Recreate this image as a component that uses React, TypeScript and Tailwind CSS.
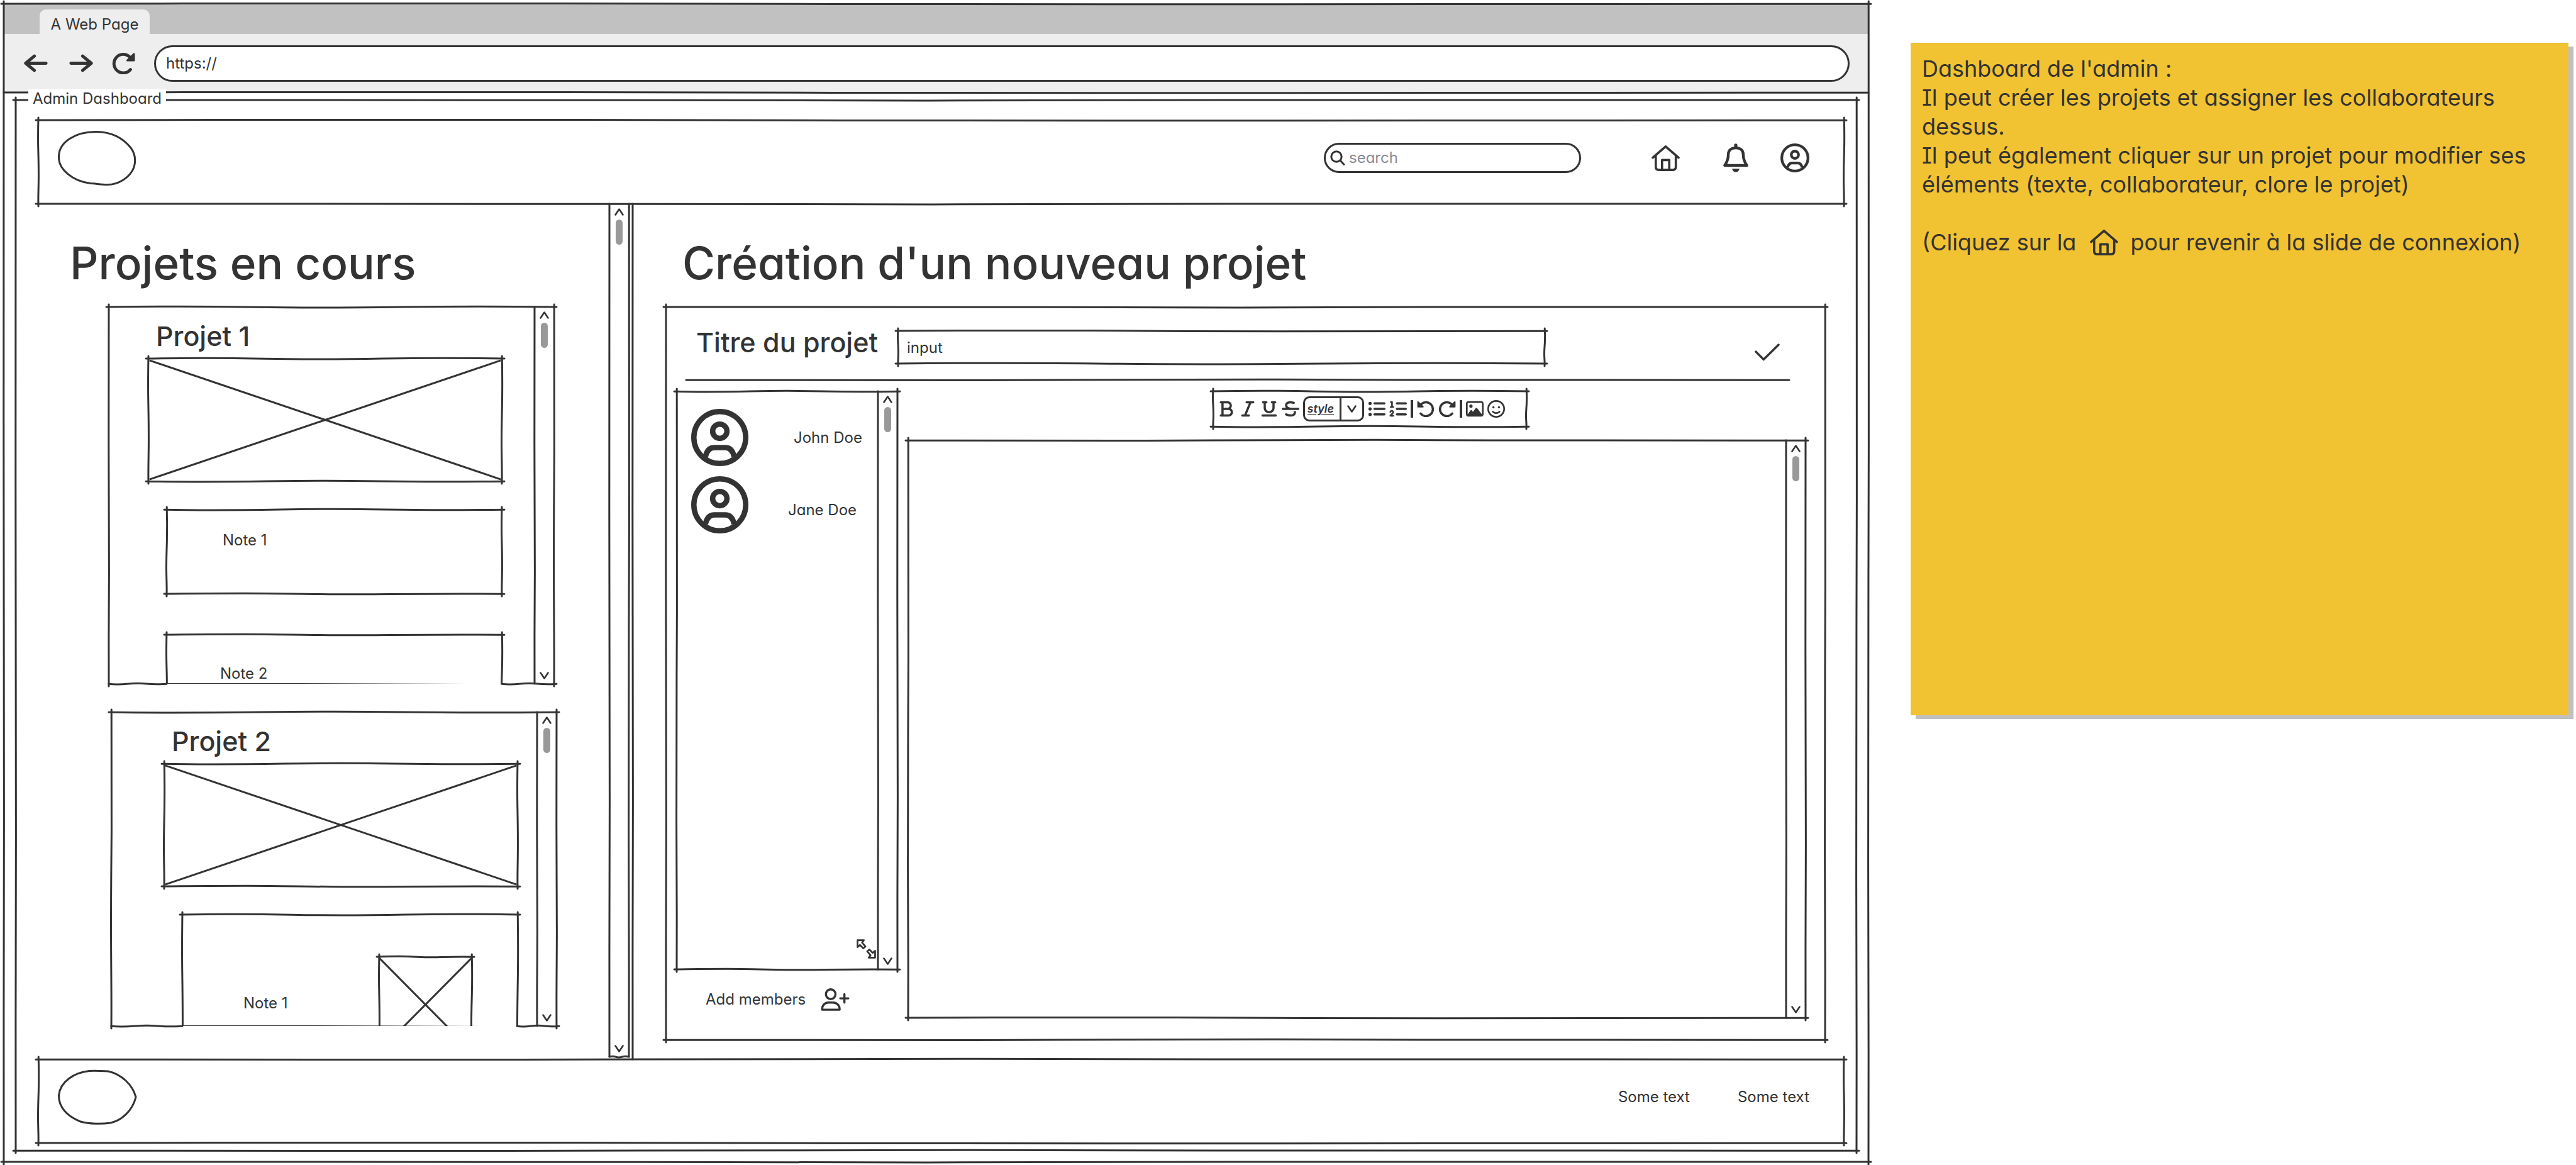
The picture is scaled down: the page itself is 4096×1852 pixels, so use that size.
import type { ReactNode } from "react";
import {
  FaBold,
  FaItalic,
  FaListOl,
  FaListUl,
  FaRegFaceSmile,
  FaRegImage,
  FaStrikethrough,
  FaUnderline,
} from "react-icons/fa6";

/* ---------- Hand-drawn outlines ---------- */

const WAVES_X = [
  "M0 4 C120 2.8 230 3 330 4.2 S560 5 660 4 S860 2.8 1000 4",
  "M0 4.2 C90 5.2 220 5 340 4 S540 3 650 4 S880 5 1000 4.2",
  "M0 4 C100 3.6 190 3 300 3.4 S480 5.2 590 4.8 S820 3.4 1000 4.2",
];
const WAVES_Y = [
  "M4 0 C3.4 160 3.4 260 3.8 360 S4.6 560 4.4 700 S3.6 880 4 1000",
  "M4.2 0 C4.8 140 4.8 260 4.4 380 S3.2 600 3.6 740 S4.4 900 4 1000",
];

function EdgeX({ v = 0, className }: { v?: number; className: string }) {
  return (
    <svg
      aria-hidden
      viewBox="0 0 1000 8"
      preserveAspectRatio="none"
      className={`pointer-events-none absolute h-2 overflow-visible ${className}`}
    >
      <path d={WAVES_X[v % 3]} fill="none" stroke="#333" strokeWidth="3" strokeLinecap="round" vectorEffect="non-scaling-stroke" />
    </svg>
  );
}

function EdgeY({ v = 0, className }: { v?: number; className: string }) {
  return (
    <svg
      aria-hidden
      viewBox="0 0 8 1000"
      preserveAspectRatio="none"
      className={`pointer-events-none absolute w-2 overflow-visible ${className}`}
    >
      <path d={WAVES_Y[v % 2]} fill="none" stroke="#333" strokeWidth="3" strokeLinecap="round" vectorEffect="non-scaling-stroke" />
    </svg>
  );
}

function Outline({ v = 0, bottom = true }: { v?: number; bottom?: boolean }) {
  return (
    <>
      <EdgeX v={v} className="-top-1 -left-1 w-[calc(100%+8px)]" />
      {bottom && <EdgeX v={v + 1} className="-bottom-1 -left-1 w-[calc(100%+8px)]" />}
      <EdgeY v={v} className="-top-1 -left-1 h-[calc(100%+8px)]" />
      <EdgeY v={v + 1} className="-top-1 -right-1 h-[calc(100%+8px)]" />
    </>
  );
}

/* ---------- Icons ---------- */

const stroke = {
  fill: "none",
  stroke: "#333",
  strokeLinecap: "round" as const,
  strokeLinejoin: "round" as const,
};

function ArrowIcon({ flip = false }: { flip?: boolean }) {
  return (
    <svg viewBox="0 0 40 30" className={`h-[29px] w-[38px] ${flip ? "-scale-x-100" : ""}`} {...stroke} strokeWidth="5.2">
      <path d="M17.5 3 L3 15 L17.5 27 M3 15 H37" />
    </svg>
  );
}

function RotateIcon({ className }: { className: string }) {
  return (
    <svg viewBox="0 0 37 35" className={className} {...stroke} strokeWidth="4.8">
      <path d="M29.5 27.5 A14.8 14.8 0 1 1 27.5 6.8" />
      <path d="M35 2.8 V13 H24.5 Z" fill="#333" strokeWidth="3" />
    </svg>
  );
}

function HomeIcon({ className }: { className: string }) {
  return (
    <svg viewBox="0 0 47 43" className={className} {...stroke} strokeWidth="3.8">
      <path d="M2 20.5 L23.5 2 L45 20.5" />
      <path d="M7 17.5 V36 Q7 41 12 41 H35.5 Q40.5 41 40.5 36 V17.5" />
      <path d="M17.5 41 V24.5 H29.5 V41" />
    </svg>
  );
}

function BellIcon() {
  return (
    <svg viewBox="0 0 42 48" className="h-[46px] w-10" {...stroke} strokeWidth="4.6">
      <path d="M21 2.8 V6" strokeWidth="5.4" />
      <path d="M21 7.3 C13 7.3 8.6 11.8 8.6 18 C8.6 25 6.5 31 2.5 36.6 H39.5 C35.5 31 33.4 25 33.4 18 C33.4 11.8 29 7.3 21 7.3 Z" />
      <path d="M15 42 H27 A6 5.7 0 0 1 15 42 Z" fill="#333" stroke="none" />
    </svg>
  );
}

function UserCircleIcon({ className }: { className: string }) {
  return (
    <svg viewBox="0 0 96 96" className={className} {...stroke} strokeWidth="9">
      <circle cx="48" cy="48" r="43.5" />
      <circle cx="48" cy="37.5" r="12" />
      <path d="M24 80 C26 70 31 64.8 39 64.8 H57 C65 64.8 70 70 72 80" strokeLinecap="butt" />
    </svg>
  );
}

function SearchIcon() {
  return (
    <svg viewBox="0 0 24 24" className="size-6 shrink-0" {...stroke} strokeWidth="3">
      <circle cx="10" cy="10" r="8.2" />
      <path d="M16 16 L22 22.5" />
    </svg>
  );
}

function UserPlusIcon() {
  return (
    <svg viewBox="0 0 48 38" className="h-9 w-[46px]" {...stroke} strokeWidth="3.6">
      <ellipse cx="16.5" cy="10" rx="8" ry="8.2" />
      <path d="M2 36 C2 28 7 24 13 24 H20 C26 24 31.5 28 31.5 36 Z" />
      <path d="M39.5 10 V24 M32.5 17 H46" />
    </svg>
  );
}

function ResizeIcon() {
  return (
    <svg viewBox="0 0 32 32" className="size-[31px]" {...stroke} strokeWidth="2.8">
      <path d="M1.6 1.6 H12 L9 5.5 L14.5 12 L11 15 L5.5 9.5 L1.6 13 Z" />
      <path d="M30.4 30.4 H20 L23 26.5 L17.5 20 L21 17 L26.5 22.5 L30.4 19 Z" />
    </svg>
  );
}

function Chevron({ down = false }: { down?: boolean }) {
  return (
    <svg viewBox="0 0 15 12" className={`h-3 w-[15px] ${down ? "rotate-180" : ""}`} {...stroke} strokeWidth="2.6">
      <path d="M1.5 10.5 L7.5 1.5 L13.5 10.5" />
    </svg>
  );
}

/* ---------- Shared pieces ---------- */

function Scrollbar({ className = "" }: { className?: string }) {
  return (
    <div className={`relative flex w-[31px] shrink-0 flex-col items-center justify-between py-[7px] ${className}`}>
      <EdgeY className="top-0 -left-1 h-full" />
      <div className="flex flex-col items-center gap-1.5">
        <button type="button" aria-label="Défiler vers le haut">
          <Chevron />
        </button>
        <div className="h-10 w-[11px] rounded-full bg-[#999]" />
      </div>
      <button type="button" aria-label="Défiler vers le bas">
        <Chevron down />
      </button>
    </div>
  );
}

function Placeholder({ className, v = 0 }: { className: string; v?: number }) {
  return (
    <div className={`relative ${className}`} role="img" aria-label="Image">
      <svg viewBox="0 0 100 100" preserveAspectRatio="none" className="absolute inset-0 size-full">
        <path
          d="M0.3 1.5 L99.7 98.5 M99.7 1.5 L0.3 98.5"
          fill="none"
          stroke="#333"
          strokeWidth="3"
          vectorEffect="non-scaling-stroke"
        />
      </svg>
      <Outline v={v} />
    </div>
  );
}

function ProjectCard({ className, v, title, children }: { className: string; v: number; title: string; children: ReactNode }) {
  return (
    <article className={`relative flex w-[708px] ${className}`}>
      <Outline v={v} bottom={false} />
      {/* The bottom line fades out where the last note runs past the edge. */}
      <div className="pointer-events-none absolute inset-x-0 bottom-0 flex">
        <div className={v === 1 ? "relative w-[113px]" : "relative w-[92px]"}>
          <EdgeX v={1} className="-bottom-1 left-0 w-full" />
        </div>
        <div className="h-px flex-1 bg-linear-to-r from-[#333] from-40% to-transparent to-90%" />
        <div className={v === 1 ? "relative w-[63px]" : "relative w-[83px]"}>
          <EdgeX v={1} className="-bottom-1 left-0 w-[calc(100%+4px)]" />
        </div>
      </div>
      <div className="min-w-0 flex-1 overflow-hidden px-[63px] pt-5">
        <div className={v === 1 ? "pl-[21px] -mr-[21px]" : ""}>
          <h3 className="pl-3 text-[43px] leading-[52px] font-medium">{title}</h3>
          <Placeholder className="mt-2.5 h-[195px] w-[562px]" v={v} />
          <div className="mt-[45px] flex w-[562px] flex-col gap-[65px] pl-[29px]">{children}</div>
        </div>
      </div>
      <Scrollbar />
    </article>
  );
}

function Blob({ d }: { d: string }) {
  return (
    <svg viewBox="0 0 125 86" className="h-[86px] w-[125px] overflow-visible" role="img" aria-label="Logo">
      <path d={d} {...stroke} strokeWidth="3" />
    </svg>
  );
}

/* ---------- Page ---------- */

function BrowserChrome() {
  return (
    <div className="relative">
      <div className="flex h-12 items-end bg-[#c1c1c1] pl-[57px]">
        <div className="flex h-[39px] w-[175px] items-center justify-center rounded-t-[10px] bg-[#eee] pt-2 text-2xl">
          A Web Page
        </div>
      </div>
      <div className="flex h-[93px] items-center gap-[30px] bg-[#eee] pr-[30px] pl-8">
        <div className="flex items-center gap-[34px]">
          <button type="button" aria-label="Précédent">
            <ArrowIcon />
          </button>
          <button type="button" aria-label="Suivant">
            <ArrowIcon flip />
          </button>
        </div>
        <button type="button" aria-label="Recharger">
          <RotateIcon className="h-[35px] w-[37px]" />
        </button>
        <input
          aria-label="Adresse"
          defaultValue="https://"
          className="h-[58px] min-w-0 flex-1 rounded-full border-[3px] border-[#333] bg-white pl-4 text-2xl outline-none"
        />
      </div>
      <EdgeX v={2} className="-bottom-1 left-0 w-full" />
    </div>
  );
}

function Header() {
  return (
    <header className="relative flex h-[133px] items-center pr-[55px] pb-[13px] pl-[31px]">
      <Outline v={2} />
      <Blob d="M62 1.5 C86 2 104 12 116 27 C124 38 124 48 121 58 C115 74 96 86 78 85.5 C68 85.5 62 84 52 83.5 C22 80 1 60 1.5 42 C1 18 28 1 62 1.5 Z" />
      <label className="ml-auto flex h-12 w-[409px] items-center rounded-full border-[3px] border-[#333] pl-[7px]">
        <SearchIcon />
        <input
          type="search"
          aria-label="Recherche"
          placeholder="search"
          className="h-10 min-w-0 flex-1 pl-1.5 text-2xl leading-10 outline-none placeholder:text-[#8a8a96]"
        />
      </label>
      <button type="button" aria-label="Accueil" className="ml-28">
        <HomeIcon className="h-[41px] w-[45px]" />
      </button>
      <button type="button" aria-label="Notifications" className="ml-[69px]">
        <BellIcon />
      </button>
      <button type="button" aria-label="Compte" className="ml-[51px]">
        <UserCircleIcon className="size-[46px]" />
      </button>
    </header>
  );
}

function Projects() {
  return (
    <section className="relative mb-1 flex w-[939px] shrink-0">
      <div className="flex-1 pt-[50px]">
        <h2 className="pl-[50px] text-[71px] leading-[88px] font-medium">Projets en cours</h2>
        <ProjectCard className="mt-[26px] ml-28 h-[599px]" v={0} title="Projet 1">
          <div className="relative h-[134px] pt-[33px] pl-[89px] text-2xl leading-8">
            <Outline v={1} />
            Note 1
          </div>
          <div className="relative h-[134px] pt-[46px] pl-[85px] text-2xl leading-8">
            <Outline v={2} />
            Note 2
          </div>
        </ProjectCard>
        <ProjectCard className="mt-[45px] ml-[116px] h-[499px]" v={1} title="Projet 2">
          <div className="relative flex h-[260px] justify-between pr-[73px] pl-[97px] text-2xl leading-8">
            <Outline v={0} />
            <span className="pt-[125px]">Note 1</span>
            <Placeholder className="mt-[67px] h-[152px] w-[147px]" v={2} />
          </div>
        </ProjectCard>
      </div>
      <Scrollbar />
      <EdgeY v={1} className="top-0 -right-1 h-full" />
      <EdgeX className="right-0 -bottom-1 w-[31px]" />
    </section>
  );
}

function Members() {
  return (
    <div className="flex w-[351px] shrink-0 flex-col pb-[46px]">
      <div className="relative flex flex-1">
        <Outline v={1} />
        <div className="flex flex-1 flex-col pr-[3px] pb-[17px] pl-[23px]">
          <ul className="flex flex-col gap-4 pt-7 text-2xl">
            <li className="flex items-center">
              <UserCircleIcon className="size-[91px]" />
              <span className="pl-[72px]">John Doe</span>
            </li>
            <li className="flex items-center">
              <UserCircleIcon className="size-[91px]" />
              <span className="pt-4 pl-[63px]">Jane Doe</span>
            </li>
          </ul>
          <div className="mt-auto self-end">
            <ResizeIcon />
          </div>
        </div>
        <Scrollbar />
      </div>
      <button type="button" className="mt-[29px] flex h-[37px] items-center gap-6 pl-[46px] text-2xl">
        Add members
        <UserPlusIcon />
      </button>
    </div>
  );
}

function Toolbar() {
  return (
    <div className="relative flex h-14 w-[498px] items-center gap-1.5 pl-[7px]" role="toolbar" aria-label="Mise en forme">
      <Outline />
      <button type="button" aria-label="Gras" className="flex w-7 justify-center"><FaBold className="size-7" /></button>
      <button type="button" aria-label="Italique" className="flex w-7 justify-center"><FaItalic className="size-7" /></button>
      <button type="button" aria-label="Souligné" className="flex w-7 justify-center"><FaUnderline className="size-7" /></button>
      <button type="button" aria-label="Barré" className="flex w-7 justify-center"><FaStrikethrough className="size-7" /></button>
      <div className="relative h-10 w-[97px] rounded-[10px] border-[3px] border-[#333]">
        <select
          aria-label="Style"
          className="size-full appearance-none bg-transparent pl-1 text-lg font-semibold italic underline underline-offset-2 outline-none"
        >
          <option>style</option>
        </select>
        <span className="pointer-events-none absolute inset-y-0 right-0 flex w-[36px] items-center justify-center border-l-[3px] border-[#333]">
          <Chevron down />
        </span>
      </div>
      <button type="button" aria-label="Liste à puces"><FaListUl className="size-7" /></button>
      <button type="button" aria-label="Liste numérotée"><FaListOl className="size-7" /></button>
      <span className="h-7 w-1 bg-[#333]" />
      <button type="button" aria-label="Annuler"><RotateIcon className="h-[26px] w-7 -scale-x-100" /></button>
      <button type="button" aria-label="Rétablir"><RotateIcon className="h-[26px] w-7" /></button>
      <span className="h-7 w-1 bg-[#333]" />
      <button type="button" aria-label="Image"><FaRegImage className="size-7" /></button>
      <button type="button" aria-label="Émoticône"><FaRegFaceSmile className="size-7" /></button>
    </div>
  );
}

function NewProject() {
  return (
    <section className="relative ml-1.5 flex flex-1 flex-col pt-[50px] pr-[30px] pb-[31px] pl-[53px]">
      <EdgeY className="top-0 -left-1 h-full" />
      <h2 className="pl-[26px] text-[71px] leading-[88px] font-medium">Création d'un nouveau projet</h2>
      <div className="relative mt-[26px] flex flex-1 flex-col">
        <Outline />
        <div className="flex items-start pt-[38px] pr-[72px] pl-12">
          <label htmlFor="project-title" className="w-[321px] text-[43px] leading-9 font-medium">
            Titre du projet
          </label>
          <div className="relative h-[52px] w-[1028px]">
            <Outline v={2} />
            <input id="project-title" defaultValue="input" className="size-full bg-transparent px-3.5 text-2xl outline-none" />
          </div>
          <button type="button" aria-label="Valider" className="ml-auto self-end pb-1">
            <svg viewBox="0 0 42 29" className="h-7 w-10" {...stroke} strokeWidth="3.6">
              <path d="M2 13.5 L15 26.5 L40 2" />
            </svg>
          </button>
        </div>
        <div className="relative mt-[26px] mr-[57px] ml-8">
          <EdgeX v={1} className="-top-1 left-0 w-full" />
        </div>
        <div className="mt-[18px] flex flex-1 gap-[17px] pr-[31px] pl-[17px]">
          <Members />
          <div className="flex flex-1 flex-col pb-[35px]">
            <div className="flex justify-center pl-10">
              <Toolbar />
            </div>
            <div className="relative mt-[22px] flex flex-1">
              <Outline v={1} />
              <textarea aria-label="Contenu du projet" className="flex-1 resize-none bg-transparent p-4 text-2xl outline-none" />
              <Scrollbar />
            </div>
          </div>
        </div>
      </div>
    </section>
  );
}

function Footer() {
  return (
    <footer className="relative flex h-[133px] items-center gap-[76px] pr-[55px] pb-[13px] pl-[31px] text-2xl">
      <Outline v={1} />
      <Blob d="M50 1.5 C60 1 70 1.5 80 2 C102 7 119 24 124 43 C119 64 102 80 84 84 C70 86 50 86 36 82 C16 74 1 60 1.5 40 C4 18 26 4 50 1.5 Z" />
      <a href="#texte-1" className="ml-auto">Some text</a>
      <a href="#texte-2">Some text</a>
    </footer>
  );
}

function StickyNote() {
  return (
    <aside className="mt-[62px] min-h-[1069px] w-[1046px] shrink-0 self-start bg-[#f1c232] px-[18px] pt-[18px] text-[36px] leading-[46px] shadow-[8px_6px_0_#c0c0c0]">
      <p>Dashboard de l'admin :</p>
      <p>
        Il peut créer les projets et assigner les collaborateurs
        <br />
        dessus.
      </p>
      <p>
        Il peut également cliquer sur un projet pour modifier ses
        <br />
        éléments (texte, collaborateur, clore le projet)
      </p>
      <p className="mt-[46px] flex items-center whitespace-nowrap">
        (Cliquez sur la
        <HomeIcon className="mr-[19px] ml-[22px] h-[41px] w-[45px]" />
        pour revenir à la slide de connexion)
      </p>
    </aside>
  );
}

export default function App() {
  return (
    <div className="flex min-h-screen gap-[67px] bg-white pt-1.5 pr-3 pb-[5px] pl-1.5 font-['Inter','Noto_Sans',sans-serif] text-[#333] [font-feature-settings:'cv11','cv08']">
      <div className="relative flex min-w-0 flex-1 flex-col">
        <BrowserChrome />
        <Outline v={2} />
        <main className="flex flex-1 flex-col px-[19px] pt-3 pb-[18px]">
          <div className="relative flex flex-1 flex-col pt-8 pr-5 pb-3 pl-9">
            <Outline />
            <h1 className="absolute -top-[17px] left-5 bg-white px-[7px] text-2xl leading-[30px]">Admin Dashboard</h1>
            <Header />
            <div className="flex flex-1">
              <Projects />
              <NewProject />
            </div>
            <Footer />
          </div>
        </main>
      </div>
      <StickyNote />
    </div>
  );
}
